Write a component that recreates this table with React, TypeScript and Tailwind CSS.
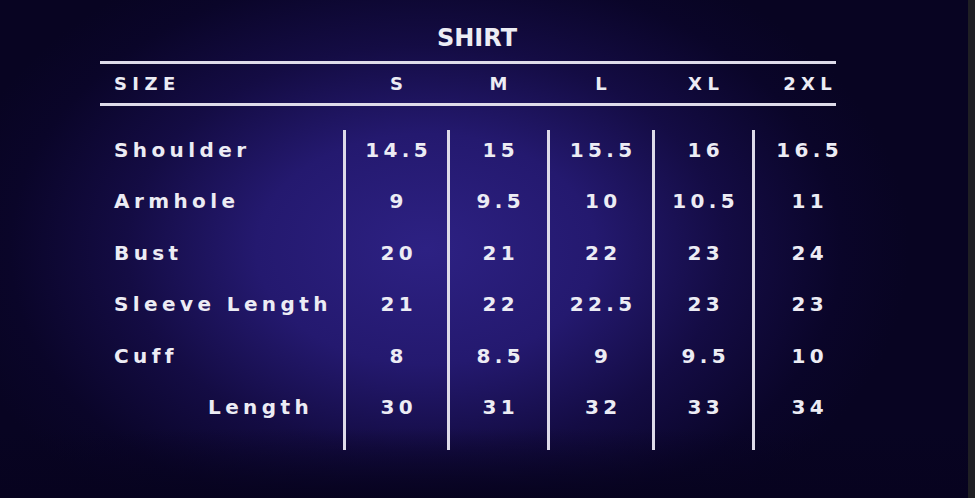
const sizes = ['S', 'M', 'L', 'XL', '2XL'];

const rows: { label: string; values: string[]; indent?: boolean }[] = [
  { label: 'Shoulder', values: ['14.5', '15', '15.5', '16', '16.5'] },
  { label: 'Armhole', values: ['9', '9.5', '10', '10.5', '11'] },
  { label: 'Bust', values: ['20', '21', '22', '23', '24'] },
  { label: 'Sleeve Length', values: ['21', '22', '22.5', '23', '23'] },
  { label: 'Cuff', values: ['8', '8.5', '9', '9.5', '10'] },
  { label: 'Length', values: ['30', '31', '32', '33', '34'], indent: true },
];

// widths of the size columns, left border included
const colW = ['w-[104px]', 'w-[100px]', 'w-[105px]', 'w-[100px]', 'w-[108px]'];

export default function App() {
  return (
    <div className="flex h-[498px] w-full overflow-hidden bg-[#080422]" style={{ fontFamily: '"DejaVu Sans", "Open Sans", sans-serif' }}>
      <div className="relative flex-1 bg-[radial-gradient(ellipse_50%_66%_at_44%_50%,#2d2183_0%,#24196f_35%,#140c44_62%,#0a0529_86%,#080422_100%)]">
        <div className="absolute inset-x-0 bottom-0 h-[70px] bg-gradient-to-b from-transparent to-[#07031f]" />
        <div className="relative pl-[100px] pt-[24px] text-[#ececf4]">
          <div className="w-[736px] pl-[18px] text-center text-[24px] font-bold leading-[28px]">SHIRT</div>

          <div className="mt-[9px] w-[736px] border-y-[3px] border-[#dedbe9] py-[8px]">
            <div className="flex h-[23px] items-center text-[18px] font-bold tracking-[0.3em]">
              <div className="w-[243px] shrink-0 pl-[14px]">SIZE</div>
              {sizes.map((s, i) => (
                <div key={s} className={`${colW[i]} shrink-0 pl-[3px] text-center`}>
                  <span className="-mr-[0.3em]">{s}</span>
                </div>
              ))}
            </div>
          </div>

          <div className="mt-[24px] flex text-[20px] font-bold tracking-[0.22em]">
            <div className="flex w-[243px] shrink-0 flex-col pl-[14px]">
              {rows.map(r => (
                <div key={r.label} className={`h-[51.4px] whitespace-nowrap pt-[8px] leading-[24px] ${r.indent ? 'pl-[94px]' : ''}`}>{r.label}</div>
              ))}
            </div>
            {sizes.map((s, i) => (
              <div key={s} className={`${colW[i]} flex shrink-0 flex-col border-l-[3px] border-[#dedbe9] pb-[12px]`}>
                {rows.map(r => (
                  <div key={r.label} className="h-[51.4px] pt-[8px] text-center leading-[24px]">
                    <span className="-mr-[0.22em]">{r.values[i]}</span>
                  </div>
                ))}
              </div>
            ))}
          </div>
        </div>
      </div>
      <div className="w-[7px] bg-[#1f1f24]" />
    </div>
  );
}
